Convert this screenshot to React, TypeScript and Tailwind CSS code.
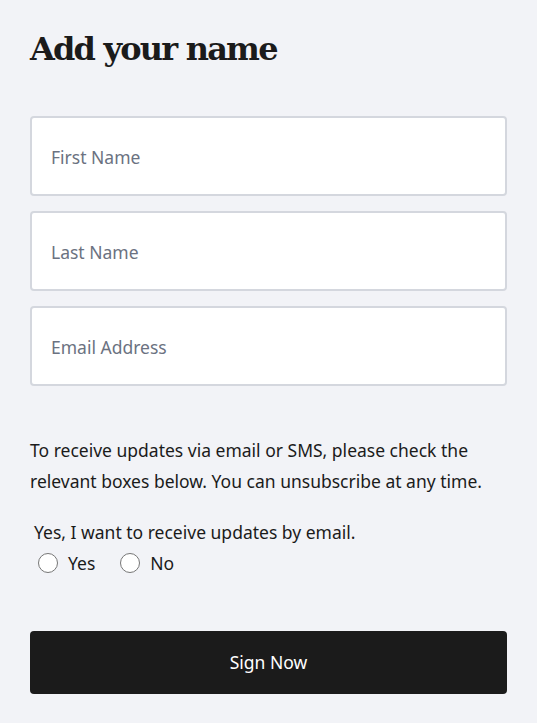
import { useState } from "react"

const fields = ["First Name", "Last Name", "Email Address"]

export default function App() {
  const [choice, setChoice] = useState<string>("")

  return (
    <div className="min-h-screen bg-[#f2f3f7] px-[30px] pt-[28px] pb-[29px] text-[#1b1b1b] font-['Noto_Sans',sans-serif]">
      <h1 className="text-[32px] font-bold leading-[42px] font-['DejaVu_Serif',serif] tracking-[-1.8px]">
        Add your name
      </h1>

      <div className="mt-[46px] flex flex-col gap-[15px]">
        {fields.map((f) => (
          <input
            key={f}
            placeholder={f}
            className="h-[80px] w-full rounded-[4px] border-2 border-[#d4d7de] bg-white px-[19px] pt-[1px] text-[17.5px] text-[#1b1b1b] placeholder:text-[#6b7281] outline-none"
          />
        ))}
      </div>

      <p className="mt-[49px] text-[17.5px] leading-[31px]">
        To receive updates via email or SMS, please check the relevant boxes below. You can unsubscribe at any time.
      </p>

      <div className="mt-[22px] pl-[4px]">
        <p className="text-[17.5px] leading-[26px]">Yes, I want to receive updates by email.</p>
        <div className="mt-[5px] flex items-center gap-[25px] pl-[4px]">
          {["Yes", "No"].map((opt) => (
            <label key={opt} className="flex items-center gap-[10px] text-[17.5px] leading-[26px] cursor-pointer">
              <span
                onClick={() => setChoice(opt)}
                className="flex h-[20px] w-[20px] items-center justify-center rounded-full border border-[#767676] bg-white"
              >
                {choice === opt && <span className="h-[10px] w-[10px] rounded-full bg-[#1b1b1b]" />}
              </span>
              {opt}
            </label>
          ))}
        </div>
      </div>

      <button className="mt-[55px] h-[63px] w-full rounded-[4px] bg-[#1b1b1b] text-[17.5px] text-white">
        Sign Now
      </button>
    </div>
  )
}
